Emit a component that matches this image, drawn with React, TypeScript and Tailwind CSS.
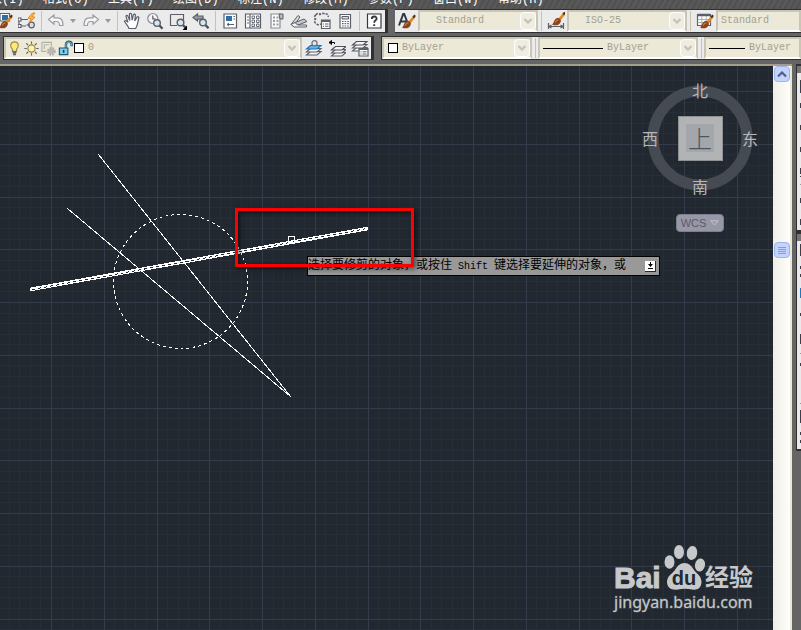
import type { ReactNode } from "react";

const CJK = "font-['Liberation_Mono','Noto_Sans_CJK_SC',monospace]";

const MENUS = [
  ["插入", "I"],
  ["格式", "O"],
  ["工具", "T"],
  ["绘图", "D"],
  ["标注", "N"],
  ["修改", "M"],
  ["参数", "P"],
  ["窗口", "W"],
  ["帮助", "H"],
];

const GRID_STEP = 10.55;

function Svg({ children, size = 18 }: { children: ReactNode; size?: number }) {
  return (
    <svg
      width={size}
      height={size}
      viewBox="0 0 18 18"
      fill="none"
      stroke="#5a5f6a"
      strokeWidth="1.2"
      className="shrink-0"
      aria-hidden="true"
    >
      {children}
    </svg>
  );
}

function Brush() {
  return (
    <g stroke="none">
      <path d="M10 10 L15.5 3.5 L17.5 5 L12.5 11.5 Z" fill="#e08a1e" />
      <path d="M14.5 4.5 L16.5 2.5 L17.8 4 L16 6.5 Z" fill="#50321c" />
      <path
        d="M4 15.5 C6 14.5 5.5 10.5 9 9 C11 8.4 13.4 10.5 12.8 12.5 C11.8 16.5 7 17.2 4 15.5 Z"
        fill="#8a4519"
      />
      <path d="M7 13.5 C8 11.5 9 10.8 10.5 10.8" stroke="#c47a45" fill="none" />
    </g>
  );
}

function Lens({ x, y }: { x: number; y: number }) {
  return (
    <g>
      <path
        d={`M${x + 2.5} ${y + 2.5} l3 3.2`}
        stroke="#4a4f5a"
        strokeWidth="2.4"
      />
      <circle cx={x} cy={y} r="3.3" fill="#d5e4ee" strokeWidth="1.4" />
    </g>
  );
}

function Sheets({ top = "#f4f4f4", edge = "#4a4f5a" }) {
  return (
    <g fill="#f4f4f4" strokeWidth="1.1">
      <path d="M1.5 16 L5.5 12.5 H16 L12 16 Z" />
      <path d="M1.5 13 L5.5 9.5 H16 L12 13 Z" />
      <path d="M1.5 10 L5.5 6.5 H16 L12 10 Z" fill={top} stroke={edge} />
    </g>
  );
}

const ICONS: Record<string, ReactNode> = {
  match: (
    <>
      <path d="M5 1.5 H14.5 V9 H5 Z" fill="#fff" />
      <path d="M7 3 H13 V8 H7 Z" fill="#2d6ea8" stroke="none" />
      <Brush />
    </>
  ),
  block: (
    <>
      <path d="M1 7.5 H10 M1 7.5 V14 M1 14 H8" />
      <path d="M0 6 h3 v3 h-3 z M0 12.5 h3 v3 h-3 z" fill="#fff" />
      <circle cx="13.5" cy="13" r="2.8" fill="#ddd" />
      <path d="M8.5 13 H12" />
      <path d="M14.5 1 L10 6.2 L13 6.8 L11 11 L17 5.2 L14 4.6 L17 1 Z" fill="#ffb52e" stroke="#e07b10" strokeWidth="0.8" />
    </>
  ),
  undo: (
    <path
      d="M1.5 7.5 L7 3 V5.8 H11 C15 5.8 16 8.5 16 13.5 H12.5 C12.5 10.5 12 9.5 9.5 9.5 H7 V12.3 Z"
      stroke="#999ca1"
      fill="#f5f5f5"
    />
  ),
  redo: (
    <path
      d="M16.5 7.5 L11 3 V5.8 H7 C3 5.8 2 8.5 2 13.5 H5.5 C5.5 10.5 6 9.5 8.5 9.5 H11 V12.3 Z"
      stroke="#999ca1"
      fill="#f5f5f5"
    />
  ),
  pan: (
    <path
      d="M6 16.5 C5 13.5 2.5 11.5 1.5 9.2 C2.2 8 3.6 8.6 5 10.5 L3 4.4 C3.2 3 4.7 3.2 5 4.4 L6.7 8.5 L6.4 2.4 C6.8 1 8.4 1.2 8.6 2.5 L9.1 8.2 L10.5 2.7 C11 1.6 12.6 2 12.4 3.3 L11.7 8.8 L14.2 5 C15.1 4.3 16.3 5.1 15.8 6.3 C14.6 9.8 14.9 13 12.6 16.5 Z"
      fill="#fff"
    />
  ),
  zoom: (
    <>
      <circle cx="6.8" cy="6.5" r="5" fill="#f5f5f5" stroke="#888d95" />
      <path d="M6.8 3.5 V6.8 H9.5" />
      <Lens x={11} y={11} />
    </>
  ),
  zoomWindow: (
    <>
      <path d="M1.5 2.5 H14.5 V12 M1.5 2.5 V13.5 H8" />
      <Lens x={11.5} y={10.5} />
      <path d="M18 13.5 V18 H13.5 Z" fill="#000" stroke="none" />
    </>
  ),
  zoomPrev: (
    <>
      <path d="M1 5.5 L5.5 2 V4 H11 V7.2 H5.5 V9 Z" fill="#999ca5" />
      <Lens x={11} y={10.5} />
    </>
  ),
  properties: (
    <>
      <path d="M3 2 H15.5 V16 H3 Z" fill="#fff" />
      <path d="M5 4 H11 V9 H5 Z" fill="#2d6ea8" stroke="none" />
      <path d="M12.5 4.5 H14 M12.5 7 H14 M6 12.5 H13 M8 11 L6 12.5 L8 14" strokeWidth="1" />
    </>
  ),
  design: (
    <>
      <path d="M1.5 2 H16.5 V16 H1.5 Z M6 2 V16" fill="#fff" />
      <path
        d="M3 5 H5 M3 8 H5 M3 11 H5 M8 4 h2.5 v2.5 h-2.5 z M12.5 4 h2.5 v2.5 h-2.5 z M8 8 h2.5 v2.5 h-2.5 z M12.5 8 h2.5 v2.5 h-2.5 z M8 12 h2.5 v2.5 h-2.5 z M12.5 12 h2.5 v2.5 h-2.5 z"
        strokeWidth="0.9"
      />
    </>
  ),
  palettes: (
    <>
      <path d="M4 2 H13 V16 H4 Z" fill="#f8f8f8" stroke="#888d95" />
      <path d="M6 4.5 h2 v2 h-2 z M9.5 4.5 h2 v2 h-2 z M6 8 h2 v2 h-2 z M9.5 8 h2 v2 h-2 z M6 11.5 h2 v2 h-2 z M9.5 11.5 h2 v2 h-2 z" fill="#999da3" stroke="none" />
      <path d="M12 2 H16 V7 H13 Z" fill="#bbb" strokeWidth="1" />
    </>
  ),
  sheetSet: (
    <>
      <path d="M1 12.5 L8 3.5 L10 5 L5 12 Z" fill="#ddd" strokeWidth="1" />
      <path d="M5 10.5 L14 7 L17 9.5 L7 13.5 Z" fill="#c5c7cb" strokeWidth="1" />
      <path d="M1 12.5 L5 10.5 L7.5 13 H16.5 V15 H4 Z" fill="#f5f5f5" strokeWidth="1" />
    </>
  ),
  markup: (
    <>
      <path
        d="M3 3 C4 1 6 1 7 2.5 C8.5 1 11 1 12 2.5 C14 1 16 3 15 5 M3 3 C1 4 1 6 2.5 7 C1 9 1.5 11 3 11.5 C4 13 6 13 8 12"
        strokeDasharray="2.4 1.2"
        strokeWidth="1.5"
      />
      <path d="M8.5 8 H17 V16.5 H8.5 Z" fill="#fff" />
      <path d="M8.5 9 H17" strokeWidth="2" />
      <path d="M10 12 h1 M12 12 h3.5 M10 14.3 h1 M12 14.3 h3.5" strokeWidth="1" />
    </>
  ),
  calc: (
    <>
      <path d="M4 2.5 H14.5 V16 H4 Z" fill="#fff" />
      <path d="M6 4.5 H12.5 V7 H6 Z" strokeWidth="1" fill="#ddd" />
      <path d="M6 9.5 H13 M6 11.7 H13 M6 14 H13" strokeDasharray="1.6 1" strokeWidth="1.2" />
    </>
  ),
  help: (
    <>
      <path d="M2.5 2 H16 V16 H2.5 Z" fill="#fff" stroke="#33373f" />
      <path d="M6.8 7 C6.8 3.6 12 3.8 11.6 6.8 C11.4 8.4 9.2 8.4 9.2 10.8 M9.2 12.2 V14" stroke="#33373f" strokeWidth="1.9" />
    </>
  ),
  textStyle: (
    <>
      <path d="M1 13.5 L5.2 2 H6.2 L10 12 M3 9.5 H8.5" strokeWidth="2" stroke="#33373f" />
      <Brush />
    </>
  ),
  dimStyle: (
    <>
      <g transform="translate(1 -3)">
        <Brush />
      </g>
      <path d="M1.5 11 V17 M16.5 11 V17 M2 14.5 H16 M4.5 13 L2 14.5 L4.5 16 M13.5 13 L16 14.5 L13.5 16" />
    </>
  ),
  tableStyle: (
    <>
      <path d="M1.5 2.5 H14.5 V13.5 H1.5 Z" fill="#fff" />
      <path d="M1.5 3 H14.5" strokeWidth="2.5" />
      <path d="M1.5 7.5 H14.5 M1.5 10.5 H14.5 M5.8 4 V13.5 M10.2 4 V13.5" strokeWidth="0.9" stroke="#a4a8ae" />
      <Brush />
    </>
  ),
  bulb: (
    <>
      <path d="M9 2 C4.5 2 3.8 7 6.8 9.8 V12 H11.2 V9.8 C14.2 7 13.5 2 9 2 Z" fill="#ffe873" stroke="#9a8a50" />
      <path d="M7 13 H11 M7.5 15.2 H10.5" strokeWidth="1.8" />
    </>
  ),
  sun: (
    <>
      <path d="M9 1.5 V4 M9 14 V16.5 M1.5 9 H4 M14 9 H16.5 M3.5 3.5 L5.3 5.3 M12.7 12.7 L14.5 14.5 M3.5 14.5 L5.3 12.7 M12.7 5.3 L14.5 3.5" />
      <circle cx="9" cy="9" r="3.8" fill="#fff3a8" stroke="#94824a" />
    </>
  ),
  viewport: (
    <g stroke="#b1b1ab">
      <path d="M2 2.5 H12 V8 M2 2.5 V12 H7 M4.5 5 H9.5 M4.5 5 V9.5" />
      <circle cx="12" cy="12" r="3.2" fill="#bbb" strokeDasharray="1.6 1" strokeWidth="3" />
    </g>
  ),
  lock: (
    <>
      <path d="M9.5 8.5 V4.5 C9.5 1 15.5 1 15.5 4.5 V6.5" strokeWidth="2.6" stroke="#1f5878" />
      <path d="M9.5 8.5 V4.5 C9.5 1.5 15.5 1.5 15.5 4.5 V6" strokeWidth="0.9" stroke="#8fd3ee" />
      <path d="M2.5 8.5 H11.5 V15.5 H2.5 Z" fill="#7fcdec" stroke="#1f5878" />
      <path d="M7 10.5 V13.5" stroke="#15384d" strokeWidth="1.6" />
    </>
  ),
  layerCurrent: (
    <>
      <Sheets top="#62b3ee" edge="#1b70b5" />
      <circle cx="9.5" cy="4.2" r="2.6" fill="#e5e5e5" stroke="#6b7079" />
    </>
  ),
  layerPrev: (
    <>
      <g transform="translate(2 1)">
        <Sheets />
      </g>
      <path d="M1 3.5 H6.5 V5 M3.5 1.5 L1 3.5 L3.5 5.5 Z" stroke="#000" strokeWidth="1" />
    </>
  ),
  layerStates: (
    <>
      <g transform="translate(0 -4)">
        <Sheets />
      </g>
      <path d="M8 9.5 H17 V17 H8 Z" fill="#fff" />
      <path d="M8 10 H17" strokeWidth="2" />
      <path d="M9.5 12.8 h1 M11.5 12.8 h4 M9.5 15 h1 M11.5 15 h4" strokeWidth="1" />
    </>
  ),
};

function ToolButton({ icon, label }: { icon: string; label: string }) {
  return (
    <button
      type="button"
      aria-label={label}
      className="flex w-[23px] shrink-0 items-center justify-center"
    >
      <Svg>{ICONS[icon]}</Svg>
    </button>
  );
}

function Caret({ label }: { label: string }) {
  return (
    <button
      type="button"
      aria-label={label}
      className="flex w-3 shrink-0 items-center justify-center"
    >
      <svg width="6" height="4" viewBox="0 0 6 4" aria-hidden="true">
        <path d="M0 0 H6 L3 4 Z" fill="#9a9a9a" />
      </svg>
    </button>
  );
}

function Separator() {
  return (
    <div className="flex w-1.5 shrink-0 justify-center py-px">
      <div className="w-px bg-[#c8c4ac]"></div>
    </div>
  );
}

function Combo(
  { label, value, className, children, hideArrow }: {
    label: string;
    value: string;
    className: string;
    children?: ReactNode;
    hideArrow?: boolean;
  },
) {
  return (
    <div
      className={`relative flex items-center border-2 border-t-[#c9c6b6] border-l-[#c9c6b6] border-r-[#c9c6b6] border-b-white bg-[#ece9d8] ${className}`}
    >
      {children}
      <select
        aria-label={label}
        className={`h-full min-w-0 flex-1 appearance-none bg-transparent text-[10px] leading-4 text-[#a3a08f] ${CJK}`}
      >
        <option>{value}</option>
      </select>
      {!hideArrow && (
        <span className="pointer-events-none absolute inset-y-0 right-0 flex w-4 items-center justify-center rounded-sm border border-white bg-[#efede2]">
          <svg width="10" height="7" viewBox="0 0 10 7" fill="none" aria-hidden="true">
            <path d="M1.5 1 L5 4.5 L8.5 1" stroke="#c5c3b8" strokeWidth="2.4" />
          </svg>
        </span>
      )}
    </div>
  );
}

function Swatch() {
  return (
    <span className="mr-1 size-[10px] shrink-0 border border-black bg-white">
    </span>
  );
}

function Toolbars() {
  return (
    <div className="flex flex-col gap-[3px] bg-[#656565] pb-1">
      <div className="flex h-6">
        <div className="flex shrink-0 overflow-hidden border-y border-r-2 border-[#303030] bg-[#ebebeb]">
          <div className="-ml-2 flex">
            <ToolButton icon="match" label="特性匹配" />
            <ToolButton icon="block" label="块编辑器" />
            <Separator />
            <ToolButton icon="undo" label="放弃" />
            <Caret label="放弃列表" />
            <ToolButton icon="redo" label="重做" />
            <Caret label="重做列表" />
            <Separator />
            <ToolButton icon="pan" label="实时平移" />
            <ToolButton icon="zoom" label="实时缩放" />
            <ToolButton icon="zoomWindow" label="窗口缩放" />
            <ToolButton icon="zoomPrev" label="缩放上一个" />
            <Separator />
            <ToolButton icon="properties" label="特性" />
            <ToolButton icon="design" label="设计中心" />
            <ToolButton icon="palettes" label="工具选项板" />
            <ToolButton icon="sheetSet" label="图纸集管理器" />
            <ToolButton icon="markup" label="标记集管理器" />
            <ToolButton icon="calc" label="快速计算器" />
            <Separator />
            <ToolButton icon="help" label="帮助" />
          </div>
        </div>
        <div className="w-2 shrink-0 border-l border-[#303030]"></div>
        <div className="flex min-w-0 flex-1 border-y border-[#303030] bg-[#ebebeb]">
          <ToolButton icon="textStyle" label="文字样式" />
          <Combo label="文字样式控制" value="Standard" className="w-[120px] shrink-0 pl-4" />
          <Separator />
          <ToolButton icon="dimStyle" label="标注样式" />
          <Combo label="标注样式控制" value="ISO-25" className="w-[120px] shrink-0 pl-4" />
          <Separator />
          <ToolButton icon="tableStyle" label="表格样式" />
          <Combo label="表格样式控制" value="Standard" className="min-w-0 flex-1 pl-[3px]" hideArrow />
        </div>
      </div>

      <div className="flex h-6 pl-[3px]">
        <div className="flex shrink-0 border-y border-r-2 border-l border-[#303030] bg-[#ebebeb]">
          <Combo label="图层" value="0" className="w-[298px]">
            <div className="flex w-[68px] shrink-0 items-center">
              <Svg size={17}>{ICONS.bulb}</Svg>
              <Svg size={17}>{ICONS.sun}</Svg>
              <Svg size={17}>{ICONS.viewport}</Svg>
              <Svg size={17}>{ICONS.lock}</Svg>
            </div>
            <Swatch />
          </Combo>
          <ToolButton icon="layerCurrent" label="将对象的图层置为当前" />
          <ToolButton icon="layerPrev" label="上一个图层" />
          <ToolButton icon="layerStates" label="图层状态管理器" />
        </div>
        <div className="w-2 shrink-0 border-l border-[#303030]"></div>
        <div className="flex min-w-0 flex-1 border-y border-l border-[#303030] bg-[#ebebeb]">
          <Combo label="颜色控制" value="ByLayer" className="w-[150px] shrink-0 pl-1">
            <Swatch />
          </Combo>
          <Separator />
          <Combo label="线型控制" value="ByLayer" className="w-[160px] shrink-0 pl-[3px]">
            <span className="mr-1 h-px w-[60px] bg-black"></span>
          </Combo>
          <Separator />
          <Combo label="线宽控制" value="ByLayer" className="min-w-0 flex-1 pl-[3px]" hideArrow>
            <span className="mr-1 h-px w-9 shrink-0 bg-black"></span>
          </Combo>
        </div>
      </div>
    </div>
  );
}

function Drawing() {
  const lines = Array.from({ length: 240 }, (_, i) => i);

  return (
    <svg
      className="absolute inset-0 h-full w-full"
      shapeRendering="crispEdges"
      role="img"
      aria-label="模型空间"
    >
      {[false, true].map((major) =>
        lines.filter((i) => (i % 5 === 0) === major).map((i) => (
          <g key={i} fill={major ? "#343c4c" : "#272e38"}>
            <rect x={Math.floor(i * GRID_STEP - 1.25)} y="0" width="1" height="100%" />
            <rect x="0" y={Math.floor(i * GRID_STEP - 27.25)} width="100%" height="1" />
          </g>
        ))
      )}
      <g fill="none" stroke="#fff">
        <circle cx="180.5" cy="215.5" r="67" strokeDasharray="3 3" />
        <path d="M98.5 88.5 L290.5 330.5 L67.5 142.5" />
        <path d="M30 223.5 L368 162.5" strokeWidth="3.6" />
        <path d="M32 223.5 L367 162.5" strokeDasharray="3 3" stroke="#212830" />
        <rect x="288.5" y="170.5" width="6" height="6" />
      </g>
    </svg>
  );
}

function ViewCube() {
  const label = "flex items-center justify-center text-base leading-5";

  return (
    <div className="absolute top-3 right-[15px] flex w-[116px] flex-col items-center text-[#b4b6b8] font-['Noto_Sans_CJK_SC',sans-serif]">
      <div className="relative grid h-[120px] w-full grid-cols-[16px_1fr_16px] grid-rows-[24px_1fr_24px]">
        <svg className="absolute inset-0" width="116" height="120" aria-hidden="true">
          <circle cx="58" cy="60" r="47" fill="none" stroke="#464b53" strokeWidth="11" />
        </svg>
        <button type="button" className={`${label} relative col-start-2`}>北</button>
        <button type="button" className={`${label} relative col-start-1 row-start-2`}>西</button>
        <button
          type="button"
          className="relative col-start-2 row-start-2 flex size-[45px] items-center justify-center self-center justify-self-center border border-[#8f9193] bg-[#b2b3b5]"
        >
          <span className="flex size-7 items-center justify-center bg-[#a3a7ab] text-2xl leading-7 font-light text-[#4d545c]">
            上
          </span>
        </button>
        <button type="button" className={`${label} relative col-start-3 row-start-2`}>东</button>
        <button type="button" className={`${label} relative col-start-2 row-start-3`}>南</button>
      </div>
      <button
        type="button"
        className="mt-4 flex h-[18px] w-12 items-center justify-center gap-1 rounded border border-[#7e7e90] bg-[#9797a8] text-[11px] leading-4 text-[#5b5b66] font-['Liberation_Sans',sans-serif]"
      >
        WCS
        <svg width="9" height="6" viewBox="0 0 9 6" fill="none" aria-hidden="true">
          <path d="M0.8 0.8 H8.2 L4.5 5 Z" stroke="#c3c3cf" />
        </svg>
      </button>
    </div>
  );
}

function Watermark() {
  return (
    <div className="absolute right-4 bottom-4 flex w-[143px] flex-col text-[#c6c8ca]">
      <div className="flex h-[46px] items-end font-['Liberation_Sans','Noto_Sans_CJK_SC',sans-serif] font-bold">
        <span className="w-[49px] text-[30px] leading-6 [-webkit-text-stroke:1px_#c6c8ca]">Bai</span>
        <span className="relative flex h-[46px] w-[42px] shrink-0 items-end justify-center">
          <svg className="absolute inset-0" width="42" height="46" viewBox="0 0 42 46" fill="#c6c8ca" aria-hidden="true">
            <ellipse cx="6.5" cy="18" rx="5" ry="6.8" />
            <ellipse cx="16" cy="8" rx="5" ry="7" />
            <ellipse cx="29" cy="9" rx="5.2" ry="7" transform="rotate(10 29 9)" />
            <ellipse cx="37" cy="21" rx="5" ry="6.6" transform="rotate(10 37 21)" />
            <path d="M21.5 19 C26 19 28.5 22 31 26 C34 30 38.5 32 38.5 38 C38.5 44 34 46.5 29 45.5 C24 44.6 20 44.6 15 45.5 C9 46.5 4 44 4 38 C4 32 9 30 12 26 C14.5 22 17 19 21.5 19 Z" />
          </svg>
          <span className="relative text-xl leading-6 text-[#212830]">du</span>
        </span>
        <span className="text-2xl leading-6">经验</span>
      </div>
      <a
        href="#jingyan"
        className="text-base leading-6 [-webkit-text-stroke:1px_#c6c8ca50] font-['Noto_Sans','Open_Sans',sans-serif]"
      >
        jingyan.baidu.com
      </a>
    </div>
  );
}

function Prompt() {
  return (
    <div
      className={`absolute top-[190px] left-[307px] flex h-5 w-[353px] items-center justify-between border border-black bg-[#999] pr-[3px] text-black ${CJK}`}
    >
      <span className="text-xs leading-4 whitespace-pre">
        选择要修剪的对象，或按住<span className="text-[10px]">{" Shift "}</span>键选择要延伸的对象，或
      </span>
      <button
        type="button"
        aria-label="显示选项"
        className="flex size-[11px] items-center justify-center border-r border-b border-[#1a1aa8] bg-white"
      >
        <svg width="9" height="9" viewBox="0 0 9 9" aria-hidden="true">
          <path d="M4 1 H5 V3 H7 L4.5 6 L2 3 H4 Z M2 7 H7 V8 H2 Z" fill="#000" />
        </svg>
      </button>
    </div>
  );
}

function ScrollBar() {
  return (
    <div className="flex w-[19px] shrink-0 flex-col border-r-2 border-[#e9e7d6] bg-linear-to-r from-[#f1eee8] to-[#fefefa] pl-px">
      <button
        type="button"
        aria-label="向上滚动"
        className="flex size-4 items-center justify-center rounded-sm border border-[#9db4ea] bg-[#c3d3fd]"
      >
        <svg width="10" height="7" viewBox="0 0 10 7" fill="none" aria-hidden="true">
          <path d="M1 5.5 L5 1.5 L9 5.5" stroke="#4d6185" strokeWidth="2.2" />
        </svg>
      </button>
      <div className="flex min-h-0 flex-1 flex-col pt-[160px]">
        <button
          type="button"
          aria-label="滚动滑块"
          className="flex size-4 flex-col items-center justify-center gap-px rounded-sm border border-[#9db4ea] bg-[#c3d3fd]"
        >
          <span className="h-px w-2 bg-[#7f9be0]"></span>
          <span className="h-px w-2 bg-[#7f9be0]"></span>
          <span className="h-px w-2 bg-[#7f9be0]"></span>
          <span className="h-px w-2 bg-[#7f9be0]"></span>
        </button>
      </div>
    </div>
  );
}

// Left edge of the docked tool palettes, each mark is [y, height, colour].
const DRAW_MARKS: [number, number, string][] = [
  [7, 13, "#3b3f4a"],
  [30, 5, "#3b3f4a"],
  [52, 5, "#3b3f4a"],
  [74, 5, "#3b3f4a"],
  [95, 6, "#3b3f4a"],
  [103, 1, "#3b3f4a"],
  [111, 1, "#999"],
  [125, 5, "#3b3f4a"],
  [146, 6, "#3b3f4a"],
];

const MODIFY_MARKS: [number, number, string][] = [
  [3, 12, "#3b3f4a"],
  [25, 3, "#3b3f4a"],
  [33, 3, "#3b3f4a"],
  [47, 10, "#1b78c2"],
  [72, 3, "#3b3f4a"],
  [93, 10, "#3b3f4a"],
  [112, 1, "#999"],
  [122, 3, "#3b3f4a"],
  [162, 1, "#999"],
  [169, 13, "#3b3f4a"],
  [191, 3, "#3b3f4a"],
  [199, 3, "#3b3f4a"],
];

function Palette(
  { label, marks, height }: {
    label: string;
    marks: [number, number, string][];
    height: number;
  },
) {
  return (
    <section aria-label={label} className="border-2 border-r-0 border-l border-[#303030] bg-[#ebe8ea]">
      <div className="h-[7px] bg-[#757575]"></div>
      <svg className="block w-full" height={height} aria-hidden="true">
        {marks.map(([y, h, fill]) => (
          <rect key={y} x="3" y={y} width="4" height={h} fill={fill} />
        ))}
      </svg>
    </section>
  );
}

export default function App() {
  return (
    <div className="flex h-screen min-w-0 flex-col overflow-hidden bg-[#656565]">
      <nav
        className={`flex h-[9px] shrink-0 items-end overflow-hidden bg-[repeating-linear-gradient(120deg,#585858_0px,#585858_3px,#505050_3px,#505050_5px)] pb-px ${CJK}`}
      >
        <div className="-ml-[22px] flex">
          {MENUS.map(([name, key]) => (
            <a key={key} href="#menu" className="w-[65px] shrink-0 text-xs leading-4 text-white">
              {name}({key})
            </a>
          ))}
        </div>
      </nav>
      <Toolbars />
      <div className="flex min-h-0 flex-1">
        <main className="flex min-w-0 flex-1 border-t-2 border-[#a49f8c]">
          <div className="relative min-w-0 flex-1 overflow-hidden bg-[#212830]">
            <Drawing />
            <ViewCube />
            <Prompt />
            <div className="absolute top-[142px] left-[235px] h-[59px] w-[179px] border-3 border-[#f00] shadow-[2px_2px_5px_#0008,inset_2px_2px_5px_#0008]">
            </div>
            <Watermark />
          </div>
          <ScrollBar />
        </main>
        <aside className="flex w-[9px] shrink-0 flex-col overflow-hidden pl-1">
          <Palette label="绘图" marks={DRAW_MARKS} height={157} />
          <Palette label="修改" marks={MODIFY_MARKS} height={208} />
        </aside>
      </div>
    </div>
  );
}
